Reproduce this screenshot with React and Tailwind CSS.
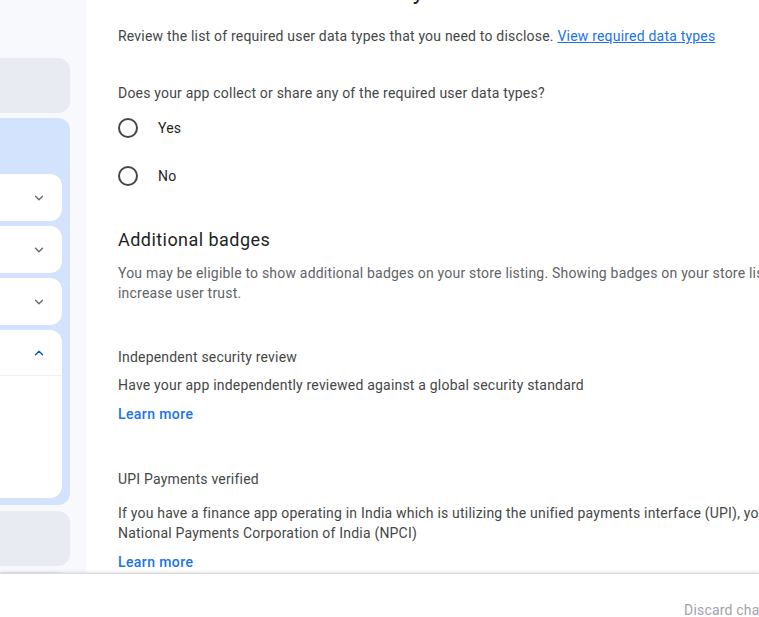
import React from 'react';
import { ChevronDown, ChevronUp } from 'lucide-react';

const SideCard = ({ open }) => (
  <div className="flex h-[47px] items-center justify-end rounded-r-xl bg-white pr-[16px]">
    {open ? (
      <ChevronUp size={14} strokeWidth={2.2} className="text-[#0b57d0]" />
    ) : (
      <ChevronDown size={14} strokeWidth={2.2} className="text-[#5f6368]" />
    )}
  </div>
);

const Radio = ({ label }) => (
  <label className="flex h-[48px] items-center">
    <span className="h-[20px] w-[20px] rounded-full border-2 border-[#444746]" />
    <span className="ml-[20px] text-[14px] text-[#1f1f1f]">{label}</span>
  </label>
);

export default function App() {
  return (
    <div
      className="flex h-[617px] w-[759px] flex-col overflow-hidden bg-white"
      style={{ fontFamily: 'Roboto, "Liberation Sans", sans-serif' }}
    >
      <div className="flex min-h-0 flex-1">
        <aside className="w-[86px] shrink-0 overflow-hidden bg-[#f8f9fd] pt-[58px]">
          <div className="h-[55px] w-[70px] rounded-r-xl bg-[#e8ebf2]" />
          <div className="mt-[5px] w-[70px] rounded-r-xl bg-[#d3e3fd] pb-[7px] pr-[8px] pt-[56px]">
            <div className="flex flex-col gap-[5px]">
              <SideCard />
              <SideCard />
              <SideCard />
              <div className="rounded-r-xl bg-white">
                <div className="flex h-[46px] items-center justify-end border-b border-[#f1f3f4] pr-[16px]">
                  <ChevronUp size={14} strokeWidth={2.4} className="text-[#0b57d0]" />
                </div>
                <div className="h-[122px]" />
              </div>
            </div>
          </div>
          <div className="mt-[6px] h-[55px] w-[70px] rounded-r-xl bg-[#e8ebf2]" />
          <div className="mt-[6px] h-[55px] w-[70px] rounded-r-xl bg-[#e8ebf2]" />
        </aside>

        <main className="min-w-0 flex-1 pl-[32px] text-[14px] leading-[20px] tracking-[0.2px] text-[#444746]">
          <div className="w-[900px]">
            <h1 className="mt-[-23px] text-[24px] leading-[28px] tracking-[0.4px] text-[#1f1f1f]">
              Data collection and security
            </h1>
            <p className="mt-[21px]">
              Review the list of required user data types that you need to disclose.{' '}
              <a href="#" className="text-[#1a73e8] underline">View required data types</a>
            </p>
            <p className="mt-[37px]">Does your app collect or share any of the required user data types?</p>
            <div className="mt-[1px]">
              <Radio label="Yes" />
              <Radio label="No" />
            </div>

            <h2 className="mt-[28px] text-[18px] leading-[24px] tracking-[0.45px] text-[#1f1f1f]">Additional badges</h2>
            <p className="mt-[11px] text-[#5f6368]">
              You may be eligible to show additional badges on your store listing. Showing badges on your store listing can
              <br />
              increase user trust.
            </p>

            <p className="mt-[44px]">Independent security review</p>
            <p className="mt-[8px]">Have your app independently reviewed against a global security standard</p>
            <a href="#" className="mt-[9px] block font-medium tracking-[0.4px] text-[#1a73e8]">Learn more</a>

            <p className="mt-[45px]">UPI Payments verified</p>
            <p className="mt-[14px]">
              If you have a finance app operating in India which is utilizing the unified payments interface (UPI), you can get verified by the
              <br />
              National Payments Corporation of India (NPCI)
            </p>
            <a href="#" className="mt-[9px] block font-medium tracking-[0.4px] text-[#1a73e8]">Learn more</a>
          </div>
        </main>
      </div>

      <footer className="relative h-[44px] shrink-0 border-t border-[#dadce0] bg-white shadow-[0_-1px_3px_rgba(60,64,67,0.15)]">
        <span className="absolute left-[684px] top-[26px] whitespace-nowrap text-[14px] leading-[20px] tracking-[0.2px] text-[#a0a3a8]">
          Discard changes
        </span>
      </footer>
    </div>
  );
}
